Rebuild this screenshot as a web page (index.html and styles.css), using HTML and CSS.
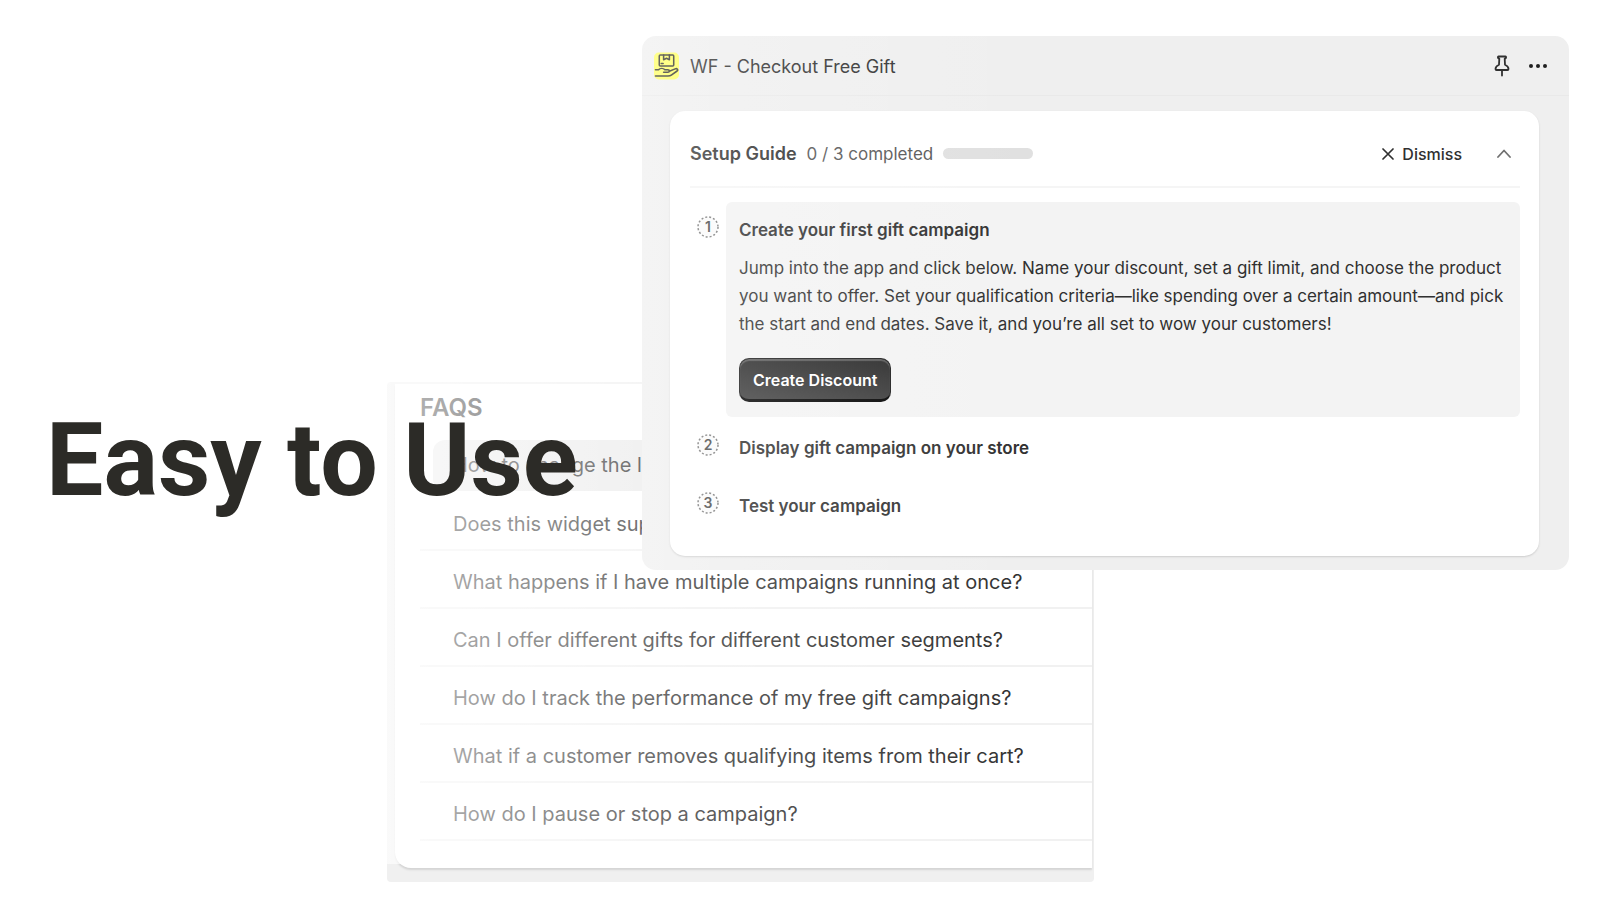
FILE: index.html
```html
<!DOCTYPE html>
<html lang="en">
<head>
  <meta charset="UTF-8">
  <title>WF - Checkout Free Gift</title>
  <link rel="stylesheet" href="styles.css">
</head>
<body>
  <main class="stage">
    <section class="faq">
      <div class="faq-card">
        <h2>FAQS</h2>
        <ul class="faq-list">
          <li class="active"><button>How to change the language?</button></li>
          <li><button>Does this widget support all themes?</button></li>
          <li><button>What happens if I have multiple campaigns running at once?</button></li>
          <li><button>Can I offer different gifts for different customer segments?</button></li>
          <li><button>How do I track the performance of my free gift campaigns?</button></li>
          <li><button>What if a customer removes qualifying items from their cart?</button></li>
          <li><button>How do I pause or stop a campaign?</button></li>
        </ul>
      </div>
    </section>

    <section class="app">
      <header class="app-bar">
        <svg class="app-logo" viewBox="0 0 26 28" fill="none" stroke="#2a2a20" stroke-width="1.6" stroke-linecap="round" stroke-linejoin="round">
          <rect width="26" height="28" rx="5" fill="#ffff5c" stroke="none"/>
          <rect x="5.500" y="2.500" width="15" height="11.500" rx="1"/>
          <path d="M10 2.500v5l3-1.500 3 1.500v-5M7.500 11.500h2"/>
          <path d="M1.500 18h3c2-2 5-2 7 0h3c2 0 2 2.500 0 2.500H10M16 19.500l6-2.500c2-.8 3.500.8 2 2.200l-6 4.300c-1 .8-2 1-3.500 1H1.500"/>
        </svg>
        <h1>WF - Checkout Free Gift</h1>
        <button class="icon-btn" aria-label="Pin">
          <svg width="16" height="22" viewBox="0 0 16 22" fill="none" stroke="#303030" stroke-width="1.800" stroke-linejoin="round" stroke-linecap="round">
            <path d="M4.500 1.500h7c.8 0 .8 1.500 0 1.800l-.8.500.3 6c2 .9 3.500 2.200 3.500 4.200 0 .8-.4 1-1 1h-11c-.6 0-1-.2-1-1 0-2 1.500-3.300 3.500-4.200l.3-6-.8-.5c-.8-.3-.8-1.800 0-1.800zM8 15v5.500"/>
          </svg>
        </button>
        <button class="icon-btn" aria-label="More actions">
          <svg width="20" height="6" viewBox="0 0 20 6" fill="#202020">
            <circle cx="3" cy="3" r="2"/><circle cx="10" cy="3" r="2"/><circle cx="17" cy="3" r="2"/>
          </svg>
        </button>
      </header>

      <div class="guide">
        <div class="guide-head">
          <h2>Setup Guide</h2>
          <label for="setup">0 / 3 completed</label>
          <progress id="setup" value="0" max="3"></progress>
          <button class="dismiss">
            <svg width="12" height="12" viewBox="0 0 12 12" fill="none" stroke="#303030" stroke-width="1.700" stroke-linecap="round"><path d="M1 1l10 10M11 1L1 11"/></svg>
            Dismiss
          </button>
          <button class="icon-btn" aria-label="Collapse">
            <svg width="14" height="9" viewBox="0 0 14 9" fill="none" stroke="#707070" stroke-width="1.800" stroke-linecap="round" stroke-linejoin="round"><path d="M1 8l6-6.500L13 8"/></svg>
          </button>
        </div>

        <ol class="steps">
          <li class="step open">
            <svg class="num" viewBox="0 0 22 22"><circle cx="11" cy="11" r="10"/><text x="11" y="16">1</text></svg>
            <div class="step-body">
              <h3>Create your first gift campaign</h3>
              <p>Jump into the app and click below. Name your discount, set a gift limit, and choose the product you want to offer. Set your qualification criteria—like spending over a certain amount—and pick the start and end dates. Save it, and you’re all set to wow your customers!</p>
              <button class="primary">Create Discount</button>
            </div>
          </li>
          <li class="step">
            <svg class="num" viewBox="0 0 22 22"><circle cx="11" cy="11" r="10"/><text x="11" y="16">2</text></svg>
            <div class="step-body"><h3>Display gift campaign on your store</h3></div>
          </li>
          <li class="step">
            <svg class="num" viewBox="0 0 22 22"><circle cx="11" cy="11" r="10"/><text x="11" y="16">3</text></svg>
            <div class="step-body"><h3>Test your campaign</h3></div>
          </li>
        </ol>
      </div>
    </section>

    <div class="fade"></div>
    <p class="headline">Easy to Use</p>
  </main>
</body>
</html>
```

FILE: styles.css
```css
* {
  box-sizing: border-box;
}

body {
  margin: 0;
  background-color: #fff;
  font-family: Inter, "Liberation Sans", sans-serif;
  color: #303030;
}

h1, h2, h3, p, ul, ol {
  margin: 0;
  padding: 0;
}

ul, ol {
  list-style: none;
}

button {
  border: 0;
  padding: 0;
  background: none;
  font: inherit;
  color: inherit;
  cursor: pointer;
}

/* the panels share cells of one grid so that they can overlap */
.stage {
  display: grid;
  grid-template-columns: 387fr 255fr 452fr 475fr 31fr;
  grid-template-rows: 346px 188px auto;
  padding: 36px 0 18px;
}

/* FAQ panel */
.faq {
  grid-column: 2 / 4;
  grid-row: 2 / 4;
  min-width: 0;
  padding: 2px 2px 14px 8px;
  background-color: #f0f0f0;
  border-radius: 4px;
}

.faq-card {
  padding: 10px 0 27px 25px;
  background-color: #fff;
  border-radius: 0 0 0 16px;
  box-shadow: 0 2px 2px #d4d4d4;
}

.faq-card h2 {
  font-size: 24px;
  line-height: 28px;
  font-weight: 600;
  margin-bottom: 13px;
}

.faq-list li {
  height: 58px;
  border-bottom: 2px solid #f1f1f1;
  overflow: hidden;
}

.faq-list button {
  display: block;
  width: 100%;
  height: 56px;
  padding: 5px 0 0 33px;
  font-size: 20px;
  text-align: left;
  white-space: nowrap;
}

.faq-list .active {
  border-bottom-color: transparent;
}

.faq-list .active button {
  height: 51px;
  margin: 5px 0 0 13px;
  padding: 0 0 2px 20px;
  background-color: #ebebeb;
  border-radius: 12px 0 0 12px;
}

/* App window */
.app {
  grid-column: 3 / 5;
  grid-row: 1 / 3;
  z-index: 1;
  min-width: 0;
  background-color: #efefef;
  border-radius: 14px;
}

.app-bar {
  display: flex;
  align-items: center;
  gap: 18px;
  height: 60px;
  padding: 1px 21px 0 12px;
  border-bottom: 1px solid #e9e9e9;
}

.app-logo {
  width: 25px;
  height: 28px;
  margin-right: -7px;
}

.app-bar h1 {
  flex: 1;
  font-size: 18px;
  font-weight: 400;
}

.icon-btn {
  display: flex;
  align-items: center;
}

.guide {
  margin: 15px 30px 14px 28px;
  padding: 0 19px 20px 20px;
  background-color: #fff;
  border-radius: 15px;
  box-shadow: 0 1px 2px #ccc;
}

.guide-head {
  display: flex;
  align-items: center;
  gap: 10px;
  height: 77px;
  padding: 10px 9px 0 0;
  border-bottom: 2px solid #f5f5f5;
}

.guide-head h2 {
  font-size: 18px;
  font-weight: 600;
}

.guide-head label {
  font-size: 17px;
  color: #555;
}

progress {
  appearance: none;
  width: 90px;
  height: 11px;
}

progress::-webkit-progress-bar {
  background-color: #e0e0e0;
  border-radius: 6px;
}

progress::-webkit-progress-value {
  background-color: #303030;
}

.dismiss {
  display: flex;
  align-items: center;
  gap: 8px;
  margin: 0 25px 0 auto;
  font-size: 16px;
  font-weight: 500;
}

.steps {
  padding-top: 14px;
}

.step {
  display: flex;
  align-items: flex-start;
  gap: 7px;
  height: 58px;
  padding-left: 7px;
}

.open {
  height: 218px;
}

.num {
  width: 22px;
  height: 22px;
  margin-top: 14px;
  overflow: visible;
}

.num circle {
  fill: #fafafa;
  stroke: #777;
  stroke-width: 1.5;
  stroke-dasharray: 2 2;
}

.num text {
  fill: #444;
  font-size: 14px;
  font-weight: 600;
  text-anchor: middle;
}

.step-body {
  flex: 1;
  padding: 16px 13px;
}

.open .step-body {
  padding: 16px 13px 15px;
  background-color: #f3f3f3;
  border-radius: 6px;
}

.step h3 {
  font-size: 17px;
  line-height: 24px;
  font-weight: 600;
}

.step p {
  margin: 12px 0 20px;
  font-size: 17px;
  line-height: 28px;
}

.primary {
  height: 44px;
  padding: 2px 13px 0;
  border: 1px solid #1a1a1a;
  border-bottom: 3px solid #000;
  border-radius: 10px;
  background: linear-gradient(#262626, #3c3c3c);
  box-shadow: inset 0 2px 1px #5a5a5a;
  font-size: 16px;
  font-weight: 600;
  color: #fff;
}

/* white haze that thins out to the right */
.fade {
  grid-column: 1 / 5;
  grid-row: 1 / 4;
  z-index: 2;
  margin-bottom: 18px;
  background: linear-gradient(90deg, rgba(255, 255, 255, 0.9), rgba(255, 255, 255, 0.6) 28%, rgba(255, 255, 255, 0.2) 46%, rgba(255, 255, 255, 0) 66%);
  pointer-events: none;
}

.headline {
  grid-column: 1 / 4;
  grid-row: 2 / 4;
  z-index: 3;
  padding: 12px 0 0 46px;
  font-family: Roboto, "Liberation Sans", sans-serif;
  font-size: 102px;
  line-height: 132px;
  font-weight: 700;
  color: #2c2b27;
}
```
